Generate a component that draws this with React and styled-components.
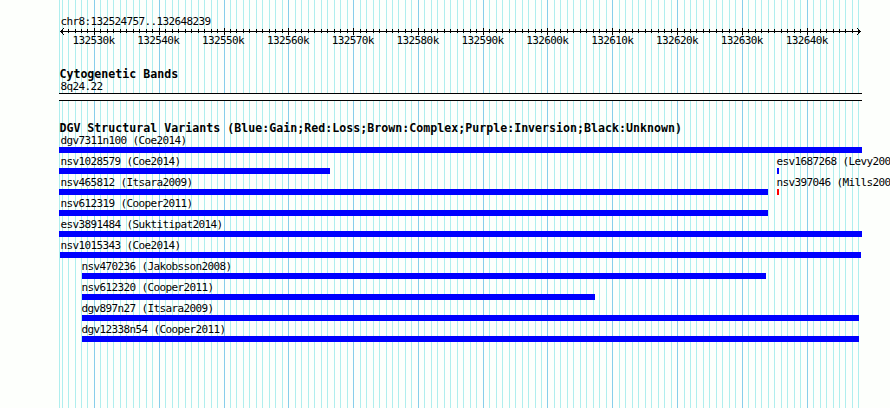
import styled, { createGlobalStyle } from "styled-components";

const START = 132524757;
const END = 132648239;
const LEFT = 60;
const WIDTH = 800;

const toX = (base) =>
  Math.round(LEFT + ((base - START) * WIDTH) / (END - START));

const ticks = [];
for (let base = 132525000; base <= END; base += 1000) {
  ticks.push({ base, x: toX(base), major: base % 10000 === 0 });
}

const variants = [
  [{ name: "dgv7311n100 (Coe2014)", start: 59, end: 862 }],
  [
    { name: "nsv1028579 (Coe2014)", start: 59, end: 330 },
    { name: "esv1687268 (Levy200", start: 777, end: 779 },
  ],
  [
    { name: "nsv465812 (Itsara2009)", start: 59, end: 768 },
    { name: "nsv397046 (Mills200", start: 777, end: 779, color: "#ff0000" },
  ],
  [{ name: "nsv612319 (Cooper2011)", start: 59, end: 768 }],
  [{ name: "esv3891484 (Suktitipat2014)", start: 59, end: 862 }],
  [{ name: "nsv1015343 (Coe2014)", start: 60, end: 861 }],
  [{ name: "nsv470236 (Jakobsson2008)", start: 82, end: 766 }],
  [{ name: "nsv612320 (Cooper2011)", start: 82, end: 595 }],
  [{ name: "dgv897n27 (Itsara2009)", start: 82, end: 859 }],
  [{ name: "dgv12338n54 (Cooper2011)", start: 82, end: 859 }],
];

const Grid = () => (
  <GridLines width="890" height="408" shapeRendering="crispEdges">
    <rect x="59" y="0" width="1" height="408" fill="#afeeee" />
    {ticks.map(({ base, x, major }) => (
      <rect
        key={base}
        x={x}
        y="0"
        width="1"
        height="408"
        fill={major ? "#87ceeb" : "#afeeee"}
      />
    ))}
  </GridLines>
);

const Ruler = () => (
  <RulerLine width="890" height="9" shapeRendering="crispEdges">
    <rect x="60" y="4" width="801" height="1" />
    {ticks.map(({ base, x, major }) => (
      <rect
        key={base}
        x={x}
        y={major ? 1 : 2}
        width="1"
        height={major ? 7 : 4}
      />
    ))}
    {[1, 2, 3].map((d) => (
      <g key={d}>
        <rect x={60 + d} y={4 - d} width="1" height="1" />
        <rect x={60 + d} y={4 + d} width="1" height="1" />
        <rect x={860 - d} y={4 - d} width="1" height="1" />
        <rect x={860 - d} y={4 + d} width="1" height="1" />
      </g>
    ))}
  </RulerLine>
);

const App = () => {
  return (
    <Container>
      <GlobalStyle />
      <Grid />
      <Content>
        <Region>chr8:132524757..132648239</Region>
        <Ruler />
        <Scale>
          {ticks
            .filter((tick) => tick.major)
            .map(({ base }) => (
              <ScaleLabel key={base}>{base / 1000}k</ScaleLabel>
            ))}
        </Scale>
        <TrackTitle>Cytogenetic Bands</TrackTitle>
        <BandName>8q24.22</BandName>
        <Band />
        <VariantsTitle>
          DGV Structural Variants
          (Blue:Gain;Red:Loss;Brown:Complex;Purple:Inversion;Black:Unknown)
        </VariantsTitle>
        {variants.map((row) => (
          <Row key={row[0].name}>
            {row.map(({ name, start, end, color }, i) => (
              <Variant
                key={name}
                $gap={i ? start - row[i - 1].end : start}
                $width={end - start}
              >
                <VariantName $shift={Math.max(60.4 - start, -0.6)}>
                  {name}
                </VariantName>
                <Bar $color={color} />
              </Variant>
            ))}
          </Row>
        ))}
      </Content>
    </Container>
  );
};
export default App;

const GlobalStyle = createGlobalStyle`
  body {
    margin: 0;
    background: #fdfffc;
  }
`;

const Container = styled.div`
  position: relative;
  width: 890px;
  height: 408px;
  overflow: hidden;
  background: #fdfffc;
  color: #000000;
  font-family: "DejaVu Sans Mono", monospace;
  font-size: 11px;
  line-height: 12px;
  letter-spacing: -0.622px;
  white-space: nowrap;
`;

const GridLines = styled.svg`
  position: absolute;
  inset: 0;
`;

const Content = styled.div`
  position: relative;
  display: flex;
  flex-direction: column;
  padding-top: 16px;
`;

const Region = styled.div`
  height: 11px;
  padding-left: 60.4px;
`;

const RulerLine = styled.svg`
  display: block;
`;

const Scale = styled.div`
  display: flex;
  gap: 16.85px;
  padding-left: 72.4px;
  margin-top: -1px;
`;

const ScaleLabel = styled.span`
  width: 48px;
`;

const TrackTitle = styled.div`
  margin-top: 21px;
  padding-left: 59.4px;
  font-size: 11.6px;
  font-weight: 700;
  line-height: 13px;
  letter-spacing: 0.016px;
`;

const BandName = styled.div`
  padding-left: 60.4px;
`;

const Band = styled.div`
  box-sizing: border-box;
  width: 803px;
  height: 8px;
  margin: 0 0 0 59px;
  background: #fdfffc;
  border-top: 1px solid #000000;
  border-bottom: 1px solid #000000;
`;

const VariantsTitle = styled(TrackTitle)`
  margin-top: 21px;
`;

const Row = styled.div`
  display: flex;
  height: 21px;
`;

const Variant = styled.div`
  flex: none;
  width: ${({ $width }) => $width}px;
  margin-left: ${({ $gap }) => $gap}px;
`;

const VariantName = styled.div`
  margin-left: ${({ $shift }) => $shift}px;
`;

const Bar = styled.div`
  height: 6px;
  background: ${({ $color }) => $color || "#0000ff"};
`;
